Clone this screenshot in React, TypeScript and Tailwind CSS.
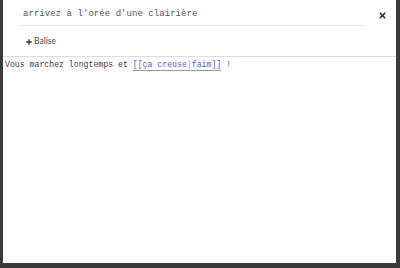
import { Plus, X } from "lucide-react";

export default function App() {
  return (
    <div className="w-[400px] h-[268px] bg-[#3a3a3a] flex pl-[3px] pr-[4px] pb-[5px] overflow-hidden">
      <div className="flex-1 bg-white flex flex-col">
        {/* Header */}
        <div className="flex items-start pl-[15px] pr-[9px] pt-[5px]">
          <div className="flex-1 border-b border-[#e6e6e6] h-[21px] flex items-center pl-[5px] mr-[13px]">
            <span className="font-['Liberation_Mono',monospace] text-[9px] tracking-[0.05px] text-[#555]">
              arrivez à l'orée d'une clairière
            </span>
          </div>
          <X className="w-[9px] h-[9px] mt-[6px] text-[#333]" strokeWidth={4.5} />
        </div>

        {/* Toolbar */}
        <div className="flex items-center gap-[1px] pl-[22px] h-[31px] pt-[1px] border-b border-[#dcdcdc] font-['Lato',sans-serif] text-[8.5px] text-[#444]">
          <Plus className="w-[8px] h-[8px] text-[#333]" strokeWidth={4} />
          <span>Balise</span>
        </div>

        {/* Body */}
        <div className="pl-[2px] pt-[1px] font-['Liberation_Mono',monospace] text-[8.2px] text-[#3c3c3c] leading-[14px]">
          Vous marchez longtemps et{" "}
          <span className="border-b border-[#999] pb-[1px]">
            <span className="text-[#5b5bd6]">[[ça creuse</span>
            <span className="text-[#7ab0e0]">|</span>
            <span className="text-[#5b5bd6]">faim]]</span>
          </span>{" "}
          <span className="text-[#666]">!</span>
        </div>
      </div>
    </div>
  );
}
